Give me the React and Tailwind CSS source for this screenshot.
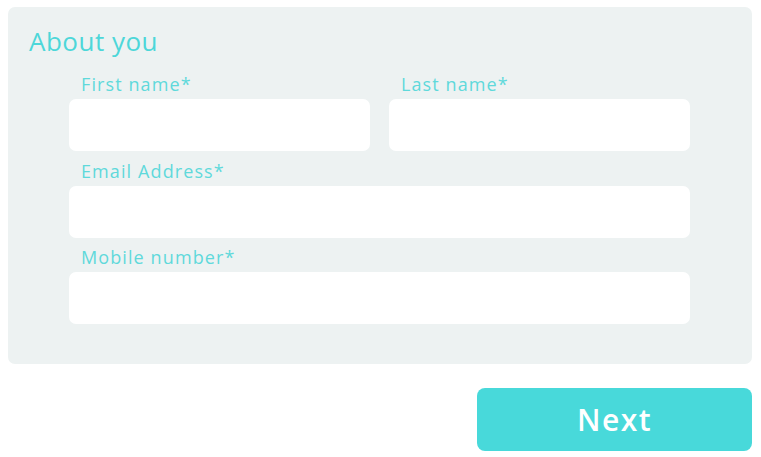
const fields = [
  { label: 'Email Address*' },
  { label: 'Mobile number*' },
]

function Field({ label }) {
  return (
    <div className="flex flex-col">
      <label className="mb-[4px] pl-3 text-[18px] leading-[22px] font-normal tracking-[1.1px] text-[#5fd9db]">
        {label}
      </label>
      <div className="h-[52px] rounded-[7px] bg-white" />
    </div>
  )
}

export default function App() {
  return (
    <div className="min-h-screen bg-white pt-[7px] pl-[8px] pr-[9px] font-['Open_Sans',sans-serif]">
      <div className="rounded-[7px] bg-[#edf2f2] pt-[18px] pb-[40px]">
        <h2 className="pl-[21px] text-[26px] leading-[32px] font-normal tracking-[0.5px] text-[#4dd7d9]">About you</h2>
        <div className="ml-[61px] mr-[62px] mt-[16px] flex flex-col gap-[8.5px]">
          <div className="grid grid-cols-2 gap-[19px]">
            <Field label="First name*" />
            <Field label="Last name*" />
          </div>
          {fields.map((f) => (
            <Field key={f.label} label={f.label} />
          ))}
        </div>
      </div>
      <div className="mt-[24px] flex justify-end">
        <button className="flex h-[63px] w-[275px] items-center justify-center rounded-[8px] bg-[#48d9da] text-[30px] font-semibold tracking-[1.5px] text-white">
          Next
        </button>
      </div>
    </div>
  )
}
